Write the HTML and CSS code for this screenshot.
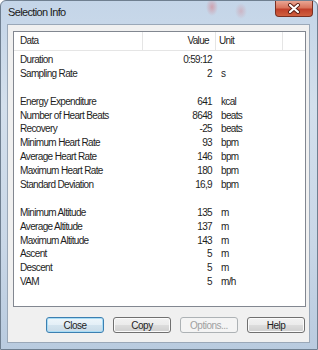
FILE: index.html
```html
<!DOCTYPE html>
<html lang="en">
<head>
  <meta charset="UTF-8">
  <title>Selection Info</title>
  <link rel="stylesheet" href="styles.css">
</head>
<body>
  <div class="window">
    <div class="titlebar">
      <span class="title">Selection Info</span>
      <div class="close-btn">
        <svg width="14" height="11" viewBox="0 0 14 11">
          <path d="M3 2 L11 9 M11 2 L3 9" stroke="#5a1e14" stroke-width="4" stroke-linecap="round"/>
          <path d="M3 2 L11 9 M11 2 L3 9" stroke="#ffffff" stroke-width="2.2" stroke-linecap="round"/>
        </svg>
      </div>
    </div>
    <div class="client">
      <div class="listbox">
        <div class="list-header">
          <div class="col col-data">Data</div>
          <div class="col col-value">Value</div>
          <div class="col col-unit">Unit</div>
          <div class="col col-rest"></div>
        </div>
        <div class="rows">
          <div class="row"><span class="col-data">Duration</span><span class="col-value">0:59:12</span><span class="col-unit"></span></div>
          <div class="row"><span class="col-data">Sampling Rate</span><span class="col-value">2</span><span class="col-unit">s</span></div>
          <div class="row"></div>
          <div class="row"><span class="col-data">Energy Expenditure</span><span class="col-value">641</span><span class="col-unit">kcal</span></div>
          <div class="row"><span class="col-data">Number of Heart Beats</span><span class="col-value">8648</span><span class="col-unit">beats</span></div>
          <div class="row"><span class="col-data">Recovery</span><span class="col-value">-25</span><span class="col-unit">beats</span></div>
          <div class="row"><span class="col-data">Minimum Heart Rate</span><span class="col-value">93</span><span class="col-unit">bpm</span></div>
          <div class="row"><span class="col-data">Average Heart Rate</span><span class="col-value">146</span><span class="col-unit">bpm</span></div>
          <div class="row"><span class="col-data">Maximum Heart Rate</span><span class="col-value">180</span><span class="col-unit">bpm</span></div>
          <div class="row"><span class="col-data">Standard Deviation</span><span class="col-value">16,9</span><span class="col-unit">bpm</span></div>
          <div class="row"></div>
          <div class="row"><span class="col-data">Minimum Altitude</span><span class="col-value">135</span><span class="col-unit">m</span></div>
          <div class="row"><span class="col-data">Average Altitude</span><span class="col-value">137</span><span class="col-unit">m</span></div>
          <div class="row"><span class="col-data">Maximum Altitude</span><span class="col-value">143</span><span class="col-unit">m</span></div>
          <div class="row"><span class="col-data">Ascent</span><span class="col-value">5</span><span class="col-unit">m</span></div>
          <div class="row"><span class="col-data">Descent</span><span class="col-value">5</span><span class="col-unit">m</span></div>
          <div class="row"><span class="col-data">VAM</span><span class="col-value">5</span><span class="col-unit">m/h</span></div>
        </div>
      </div>
      <div class="buttons">
        <button class="btn btn-default">Close</button>
        <button class="btn">Copy</button>
        <button class="btn" disabled>Options...</button>
        <button class="btn">Help</button>
      </div>
    </div>
  </div>
</body>
</html>
```

FILE: styles.css
```css
body {
  margin: 0;
  background-color: #ffffff;
  font-family: "Liberation Sans", Arial, sans-serif;
}

/* ------VENTANA------- */
.window {
  width: 318px;
  height: 350px;
  box-sizing: border-box;
  border: 1px solid #6f7f90;
  border-radius: 6px 6px 0 0;
  display: flex;
  flex-direction: column;
  background:
    radial-gradient(ellipse 6px 9px at 211px 6px, rgba(214, 120, 130, 0.55), transparent),
    radial-gradient(ellipse 6px 8px at 240px 10px, rgba(214, 120, 130, 0.35), transparent),
    linear-gradient(to bottom, #c4d5e8 0%, #d3dfec 30%, #c9d7e7 70%, #b9cbdf 100%);
}

.titlebar {
  height: 23px;
  flex-shrink: 0;
  display: flex;
  justify-content: space-between;
  align-items: flex-start;
}

.title {
  padding-left: 7px;
  line-height: 23px;
  font-size: 11px;
  letter-spacing: -0.65px;
  color: #1a1a1a;
}

.close-btn {
  width: 38px;
  height: 16px;
  margin-right: 4px;
  box-sizing: border-box;
  border: 1px solid #7a3022;
  border-top: none;
  border-radius: 0 0 4px 4px;
  background: linear-gradient(to bottom, #e9a593 0%, #d9745c 45%, #c0402a 55%, #d0603f 100%);
  display: flex;
  align-items: center;
  justify-content: center;
}

.client {
  flex: 1;
  margin: 0 7px 6px 6px;
  border: 1px solid #9aa8b8;
  background-color: #f0f0f0;
  padding: 6px 3px 0 5px;
  display: flex;
  flex-direction: column;
}

/* ------LISTA------- */
.listbox {
  height: 276px;
  box-sizing: border-box;
  border: 1px solid #828790;
  background-color: #ffffff;
  font-size: 10px;
  letter-spacing: -0.65px;
  color: #1e1e1e;
}

.list-header {
  display: flex;
  height: 19px;
  box-sizing: border-box;
  border-bottom: 1px solid #e5e5e5;
  line-height: 18px;
}

.list-header .col {
  border-right: 1px solid #e5e5e5;
  box-sizing: border-box;
}

.list-header .col-rest {
  flex: 1;
  border-right: none;
}

.rows {
  padding-top: 2px;
}

.row {
  display: flex;
  height: 13.9px;
  line-height: 13.9px;
}

.col-data {
  width: 129px;
  padding-left: 6px;
  box-sizing: border-box;
}

.col-value {
  width: 73px;
  padding-right: 4px;
  text-align: right;
  box-sizing: border-box;
}

.col-unit {
  width: 67px;
  padding-left: 5px;
  box-sizing: border-box;
}

.list-header .col-value {
  padding-right: 6px;
}

.list-header .col-unit {
  padding-left: 3px;
}

/* ------BOTONES------- */
.buttons {
  display: flex;
  justify-content: flex-end;
  gap: 9px;
  margin-top: 10px;
  padding-right: 1px;
}

.btn {
  width: 58px;
  height: 16px;
  padding: 0;
  border: 1px solid #707070;
  border-radius: 3px;
  background: linear-gradient(to bottom, #f2f2f2 0%, #ebebeb 50%, #dddddd 50%, #cfcfcf 100%);
  box-shadow: inset 0 0 0 1px #fbfbfb;
  font-family: "Liberation Sans", Arial, sans-serif;
  font-size: 10px;
  letter-spacing: -0.5px;
  color: #1e1e1e;
}

.btn-default {
  border-color: #3c7fb1;
  box-shadow: inset 0 0 0 1px #a8dcf5;
  background: linear-gradient(to bottom, #eef6fb 0%, #e4eff7 50%, #d4e4ef 50%, #c9dbe8 100%);
}

.btn:disabled {
  border-color: #adb2b5;
  background: #f4f4f4;
  box-shadow: none;
  color: #a0a0a0;
}
```
